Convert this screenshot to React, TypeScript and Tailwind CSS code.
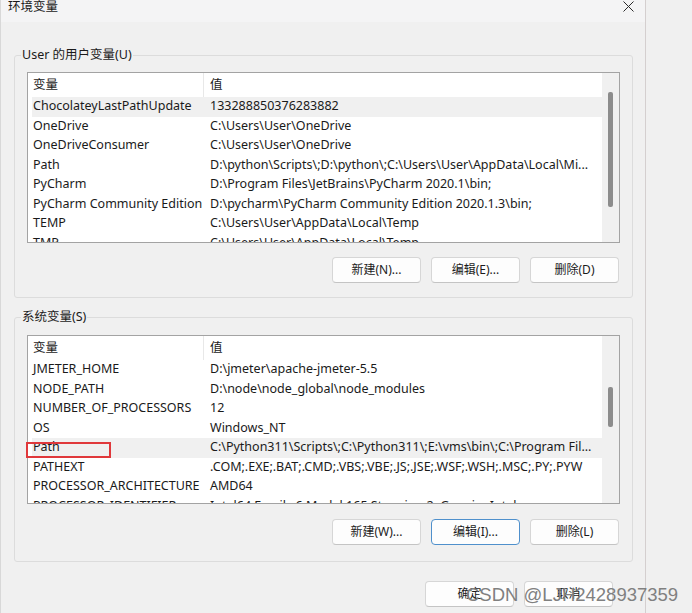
import type { ReactNode } from 'react';

type Row = { name: string; value: string; selected?: boolean; marked?: boolean };

const userRows: Row[] = [
  { name: 'ChocolateyLastPathUpdate', value: '133288850376283882', selected: true },
  { name: 'OneDrive', value: 'C:\\Users\\User\\OneDrive' },
  { name: 'OneDriveConsumer', value: 'C:\\Users\\User\\OneDrive' },
  { name: 'Path', value: 'D:\\python\\Scripts\\;D:\\python\\;C:\\Users\\User\\AppData\\Local\\Mi...' },
  { name: 'PyCharm', value: 'D:\\Program Files\\JetBrains\\PyCharm 2020.1\\bin;' },
  { name: 'PyCharm Community Edition', value: 'D:\\pycharm\\PyCharm Community Edition 2020.1.3\\bin;' },
  { name: 'TEMP', value: 'C:\\Users\\User\\AppData\\Local\\Temp' },
  { name: 'TMP', value: 'C:\\Users\\User\\AppData\\Local\\Temp' },
];

const systemRows: Row[] = [
  { name: 'JMETER_HOME', value: 'D:\\jmeter\\apache-jmeter-5.5' },
  { name: 'NODE_PATH', value: 'D:\\node\\node_global\\node_modules' },
  { name: 'NUMBER_OF_PROCESSORS', value: '12' },
  { name: 'OS', value: 'Windows_NT' },
  { name: 'Path', value: 'C:\\Python311\\Scripts\\;C:\\Python311\\;E:\\vms\\bin\\;C:\\Program Fil...', selected: true, marked: true },
  { name: 'PATHEXT', value: '.COM;.EXE;.BAT;.CMD;.VBS;.VBE;.JS;.JSE;.WSF;.WSH;.MSC;.PY;.PYW' },
  { name: 'PROCESSOR_ARCHITECTURE', value: 'AMD64' },
  { name: 'PROCESSOR_IDENTIFIER', value: 'Intel64 Family 6 Model 165 Stepping 2, GenuineIntel' },
];

function WinButton({ children, focused, className }: { children: ReactNode; focused?: boolean; className?: string }) {
  return (
    <div
      className={
        'w-[89px] h-[26px] flex items-center justify-center rounded-[4px] bg-[#fdfdfd] text-[12px] text-[#1b1b1b] border ' +
        (focused ? 'border-[#4f90cc] ' : 'border-[#d6d6d6] border-b-[#c4c4c4] ') +
        (className ?? '')
      }
    >
      {children}
    </div>
  );
}

function VarList({ rows, thumbTop, thumbHeight, height }: { rows: Row[]; thumbTop: string; thumbHeight: string; height: string }) {
  return (
    <div className={'flex border border-[#a3a3a3] bg-white overflow-x-visible overflow-y-clip ' + height}>
      <div className="flex-1 flex flex-col overflow-x-visible overflow-y-clip">
        <div className="h-[24px] flex items-center shrink-0 text-[12.5px]">
          <div className="w-[176px] h-full flex items-center pl-[5px] border-r border-[#e8e8e8]">变量</div>
          <div className="pl-[6px]">值</div>
        </div>
        {rows.map((r) => (
          <div
            key={r.name}
            className={
              'h-[19.5px] shrink-0 ml-[4px] flex items-center text-[12.5px] whitespace-nowrap relative ' +
              (r.selected ? 'bg-[#f0f0f0]' : '')
            }
          >
            <div className="w-[172px] pl-[1px]">{r.name}</div>
            <div className="pl-[6px]">{r.value}</div>
            {r.marked && <div className="absolute left-[-6px] top-[4px] w-[85px] h-[16px] border-2 border-[#e0383b] z-10" />}
          </div>
        ))}
      </div>
      <div className="w-[17px] shrink-0 bg-[#f0f0f0] flex flex-col">
        <div className={'ml-[6px] w-[5px] bg-[#8c8c8c] rounded-[2px] ' + thumbTop + ' ' + thumbHeight} />
      </div>
    </div>
  );
}

export default function App() {
  return (
    <div
      className="w-[692px] h-[613px] flex bg-[#f0f0f0] text-[#1a1a1a] overflow-hidden relative"
      style={{ fontFamily: '"Noto Sans", "Noto Sans CJK SC", sans-serif' }}
    >
      {/* Dialog */}
      <div className="w-[646px] h-full flex flex-col border-r border-[#d4cfcf] border-l border-l-[#d8d8d8]">
        {/* Title bar */}
        <div className="h-[22px] shrink-0 bg-[#f4f4f5] flex items-start justify-between pl-[7px] pr-[11px]">
          <span className="text-[12.5px] leading-[14px]">环境变量</span>
          <svg width="11" height="11" viewBox="0 0 11 11" className="mt-[1px]">
            <path d="M0.5 0.5L10.5 10.5M10.5 0.5L0.5 10.5" stroke="#2b2b2b" strokeWidth="1" />
          </svg>
        </div>

        <div className="flex flex-col pl-[13px] pr-[12px]">
          {/* User variables */}
          <fieldset className="mt-[25px] border border-[#dcdcdc] rounded-[3px] px-[12px] pb-[14px]">
            <legend className="-ml-[6px] px-[1px] text-[12.5px] leading-[16px]">User 的用户变量(U)</legend>
            <div className="mt-[9px]">
              <VarList rows={userRows} thumbTop="mt-[19px]" thumbHeight="h-[115px]" height="h-[171px]" />
            </div>
            <div className="mt-[14px] flex justify-end gap-[10px] pr-[1px]">
              <WinButton>新建(N)...</WinButton>
              <WinButton>编辑(E)...</WinButton>
              <WinButton>删除(D)</WinButton>
            </div>
          </fieldset>

          {/* System variables */}
          <fieldset className="mt-[11px] border border-[#dcdcdc] rounded-[3px] px-[12px] pb-[16px]">
            <legend className="-ml-[6px] px-[1px] text-[12.5px] leading-[16px]">系统变量(S)</legend>
            <div className="mt-[10px]">
              <VarList rows={systemRows} thumbTop="mt-[51px]" thumbHeight="h-[40px]" height="h-[169px]" />
            </div>
            <div className="mt-[15px] flex justify-end gap-[10px] pr-[1px]">
              <WinButton>新建(W)...</WinButton>
              <WinButton focused>编辑(I)...</WinButton>
              <WinButton>删除(L)</WinButton>
            </div>
          </fieldset>

          {/* Dialog buttons */}
          <div className="mt-[19px] flex justify-end gap-[10px] pr-[20px]">
            <WinButton>确定</WinButton>
            <WinButton>取消</WinButton>
          </div>
        </div>
      </div>

      {/* Watermark */}
      <div
        className="absolute left-[466px] top-[584px] text-[18.5px] leading-[22px] text-[#808080] whitespace-nowrap"
        style={{ fontFamily: '"Liberation Sans", Arial, sans-serif' }}
      >
        CSDN @LJH2428937359
      </div>
    </div>
  );
}
